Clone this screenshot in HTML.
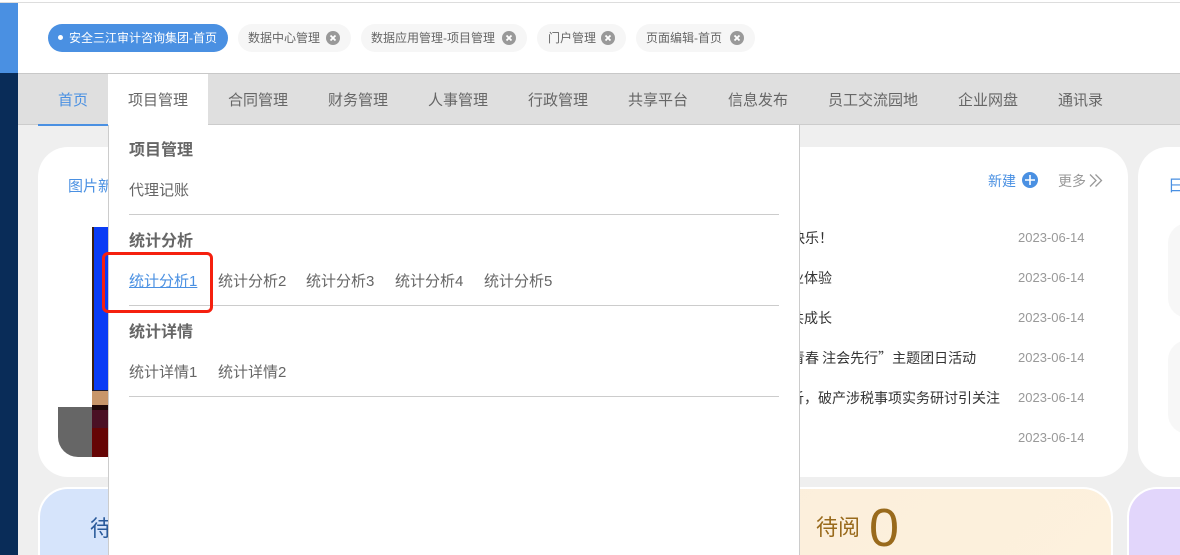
<!DOCTYPE html>
<html lang="zh-CN">
<head>
<meta charset="utf-8">
<title>页面</title>
<style>
html,body{margin:0;padding:0;width:1180px;height:555px;overflow:hidden;}
body{position:relative;background:#efefef;font-family:"Liberation Sans","Noto Sans CJK SC",sans-serif;color:#666;}
div,a,span{position:absolute;display:block;white-space:nowrap;}
.t{height:28px;top:24px;border-radius:14px;background:#f6f6f6;}
.t span{top:0;line-height:28px;font-size:12px;color:#666;}
.x{top:7px;width:14px;height:14px;}
.n{top:76px;line-height:50px;font-size:15px;color:#666;}
.h{left:129px;font-size:16px;font-weight:bold;line-height:24px;color:#666;}
.l{font-size:15px;line-height:22px;color:#666;}
.r{left:129px;width:650px;height:1px;background:#ccc;}
.d{left:1018px;font-size:13px;line-height:20px;color:#999;}
.i{font-family:"Noto Sans CJK SC","Liberation Sans",sans-serif;font-size:14px;line-height:22px;color:#333;}
.c{top:487px;height:68px;box-sizing:border-box;border:2px solid #fff;border-bottom:0;border-radius:30px 30px 0 0;}
</style>
</head>
<body>
<div style="left:0;top:0;width:1180px;height:73px;background:#fff"></div>
<div style="left:0;top:2px;width:1180px;height:1px;background:#ddd"></div>
<div style="left:0;top:3px;width:18px;height:70px;background:#4a90e2"></div>
<div style="left:0;top:73px;width:18px;height:482px;background:#092c58"></div>
<div style="left:18px;top:73px;width:1162px;height:1px;background:#c8c8c8"></div>
<div style="left:18px;top:74px;width:1162px;height:50px;background:#dfdfdf"></div>
<div style="left:18px;top:124px;width:1162px;height:1px;background:#ccc"></div>

<div class="t" style="left:48px;width:180px;background:#4a90e2">
  <div style="left:10px;top:11px;width:5px;height:5px;border-radius:50%;background:#fff"></div>
  <span style="left:21px;color:#fff">安全三江审计咨询集团-首页</span>
</div>
<div class="t" style="left:238px;width:113px"><span style="left:10px">数据中心管理</span>
  <svg class="x" style="position:absolute;left:88px" viewBox="0 0 14 14"><circle cx="7" cy="7" r="7" fill="#999"/><path d="M4.500 4.500l5 5M9.500 4.500l-5 5" stroke="#fff" stroke-width="1.800"/></svg></div>
<div class="t" style="left:361px;width:166px"><span style="left:10px">数据应用管理-项目管理</span>
  <svg class="x" style="position:absolute;left:141px" viewBox="0 0 14 14"><circle cx="7" cy="7" r="7" fill="#999"/><path d="M4.500 4.500l5 5M9.500 4.500l-5 5" stroke="#fff" stroke-width="1.800"/></svg></div>
<div class="t" style="left:537px;width:89px"><span style="left:11px">门户管理</span>
  <svg class="x" style="position:absolute;left:64px" viewBox="0 0 14 14"><circle cx="7" cy="7" r="7" fill="#999"/><path d="M4.500 4.500l5 5M9.500 4.500l-5 5" stroke="#fff" stroke-width="1.800"/></svg></div>
<div class="t" style="left:636px;width:119px"><span style="left:10px">页面编辑-首页</span>
  <svg class="x" style="position:absolute;left:94px" viewBox="0 0 14 14"><circle cx="7" cy="7" r="7" fill="#999"/><path d="M4.500 4.500l5 5M9.500 4.500l-5 5" stroke="#fff" stroke-width="1.800"/></svg></div>

<div style="left:38px;top:124px;width:70px;height:2px;background:#4a90e2"></div>
<div class="n" style="left:58px;color:#4a90e2">首页</div>
<div style="left:108px;top:74px;width:100px;height:52px;background:#fff"></div>
<div class="n" style="left:128px">项目管理</div>
<div class="n" style="left:228px">合同管理</div>
<div class="n" style="left:328px">财务管理</div>
<div class="n" style="left:428px">人事管理</div>
<div class="n" style="left:528px">行政管理</div>
<div class="n" style="left:628px">共享平台</div>
<div class="n" style="left:728px">信息发布</div>
<div class="n" style="left:828px">员工交流园地</div>
<div class="n" style="left:958px">企业网盘</div>
<div class="n" style="left:1058px">通讯录</div>

<div style="left:38px;top:147px;width:1090px;height:330px;border-radius:30px;background:#fff"></div>
<div style="left:1138px;top:147px;width:80px;height:330px;border-radius:30px;background:#fff"></div>
<div style="left:1168px;top:223px;width:40px;height:95px;border-radius:30px;background:#f7f7f7"></div>
<div style="left:1168px;top:340px;width:40px;height:94px;border-radius:30px;background:#f7f7f7"></div>
<div style="left:1168px;top:176px;font-size:16px;line-height:22px;color:#4a90e2">日</div>
<div style="left:68px;top:176px;font-size:15px;line-height:22px;color:#4a90e2">图片新闻</div>

<div style="left:58px;top:407px;width:40px;height:50px;background:#666;border-bottom-left-radius:20px"></div>
<div style="left:92px;top:227px;width:17px;height:230px;background:#7b1010;overflow:hidden">
  <div style="left:0;top:0;width:17px;height:163px;background:#0a3cf5"></div>
  <div style="left:0;top:0;width:2px;height:163px;background:#3a2010"></div>
  <div style="left:0;top:163px;width:17px;height:1px;background:#1a1a30"></div>
  <div style="left:0;top:164px;width:17px;height:14px;background:#c8966a"></div>
  <div style="left:0;top:178px;width:17px;height:5px;background:#200808"></div>
  <div style="left:0;top:183px;width:17px;height:18px;background:#4a1024"></div>
  <div style="left:0;top:201px;width:17px;height:29px;background:#650505"></div>
</div>

<div style="left:988px;top:170px;font-size:14px;line-height:22px;color:#4a90e2">新建</div>
<svg style="position:absolute;left:1022px;top:172px" width="16" height="16" viewBox="0 0 16 16"><circle cx="8" cy="8" r="8" fill="#4a90e2"/><path d="M8 3v10M3 8h10" stroke="#fff" stroke-width="1.600"/></svg>
<div style="left:1058px;top:170px;font-size:14px;line-height:22px;color:#999">更多</div>
<svg style="position:absolute;left:1089px;top:173px" width="14" height="15" viewBox="0 0 14 15"><path d="M1 1.500l6 6-6 6M6.500 1.500l6 6-6 6" fill="none" stroke="#999" stroke-width="1.300"/></svg>

<div class="i" style="left:791px;top:227px">快乐！</div>
<div class="i" style="left:790px;top:267px">业体验</div>
<div class="i" style="left:790px;top:307px">共成长</div>
<div class="i" style="left:791px;top:347px">青春 注会先行”主题团日活动</div>
<div class="i" style="left:790px;top:387px">析，破产涉税事项实务研讨引关注</div>
<div class="d" style="top:228px">2023-06-14</div>
<div class="d" style="top:268px">2023-06-14</div>
<div class="d" style="top:308px">2023-06-14</div>
<div class="d" style="top:348px">2023-06-14</div>
<div class="d" style="top:388px">2023-06-14</div>
<div class="d" style="top:428px">2023-06-14</div>

<div class="c" style="left:38px;width:200px;background:#d6e4fb"></div>
<div style="left:90px;top:512px;font-size:22px;line-height:34px;color:#2a5a9a">待办</div>
<div class="c" style="left:700px;width:413px;background:linear-gradient(135deg,#fbeedb,#fdf1dd)"></div>
<div style="left:816px;top:511px;font-size:22px;line-height:34px;color:#996a1c">待阅</div>
<div style="left:869px;top:495px;font-size:54px;line-height:66px;color:#996a1c">0</div>
<div class="c" style="left:1127px;width:100px;background:#e2d6fb"></div>

<div style="left:108px;top:125px;width:692px;height:430px;box-sizing:border-box;background:#fff;border-left:1px solid #ccc;border-right:1px solid #ccc"></div>
<div style="left:109px;top:124px;width:99px;height:2px;background:#fff"></div>

<div class="h" style="top:139px">项目管理</div>
<div class="l" style="left:129px;top:180px">代理记账</div>
<div class="r" style="top:214px"></div>
<div class="h" style="top:230px">统计分析</div>
<div class="l" style="left:129px;top:271px;color:#4a90e2;text-decoration:underline">统计分析1</div>
<div class="l" style="left:218px;top:271px">统计分析2</div>
<div class="l" style="left:306px;top:271px">统计分析3</div>
<div class="l" style="left:395px;top:271px">统计分析4</div>
<div class="l" style="left:484px;top:271px">统计分析5</div>
<div class="r" style="top:305px"></div>
<div class="h" style="top:321px">统计详情</div>
<div class="l" style="left:129px;top:362px">统计详情1</div>
<div class="l" style="left:218px;top:362px">统计详情2</div>
<div class="r" style="top:396px"></div>

<div style="left:102px;top:252px;width:111px;height:61px;box-sizing:border-box;border:3px solid #f5200f;border-radius:6px"></div>
</body>
</html>
